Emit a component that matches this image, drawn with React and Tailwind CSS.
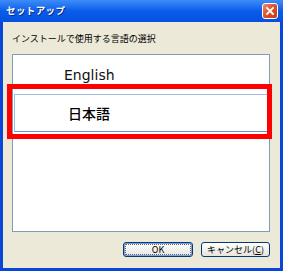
import React from "react";

export default function App() {
  const jp = { fontFamily: '"Noto Sans CJK JP", "Noto Sans", sans-serif' };
  return (
    <div className="relative w-[283px] h-[271px] flex flex-col bg-[#0A47D8] overflow-hidden" style={jp}>
      {/* Title bar */}
      <div className="h-[22px] flex items-center justify-between pl-[6px] pr-[5px] bg-gradient-to-b from-[#3C8CF8] via-[#0A5CE9] to-[#0550E0]">
        <span className="text-white text-[9.5px] font-bold leading-none tracking-[0.4px] [text-shadow:1px_1px_0_#0A2A8A]">セットアップ</span>
        <div className="w-[16px] h-[16px] rounded-[3px] border border-white bg-gradient-to-br from-[#E98A6C] via-[#DD4E26] to-[#C3401C] flex items-center justify-center">
          <svg width="10" height="10" viewBox="0 0 10 10">
            <path d="M2 2 L8 8 M8 2 L2 8" stroke="white" strokeWidth="1.8" strokeLinecap="square" />
          </svg>
        </div>
      </div>
      {/* Body */}
      <div className="flex-1 mx-[3px] mb-[3px] bg-[#ECE9D8] flex flex-col pl-[9px] pr-[10px]">
        <div className="h-[32px] flex items-center text-[9px] leading-none text-black pt-[1px]">
          インストールで使用する言語の選択
        </div>
        <div className="h-[178px] border border-[#7F9DB9] bg-white flex flex-col pt-[1px] px-[1px]">
          <div className="h-[38px] flex items-center pl-[50px] text-[14px] text-[#111]" style={{ fontFamily: '"DejaVu Sans", sans-serif' }}>
            English
          </div>
          <div className="h-[38px] flex items-center pl-[53px] border border-[#A3BAE6] border-b-[#6F8FD6] text-[14px] font-medium text-black">
            日本語
          </div>
        </div>
        <div className="flex-1 flex items-center justify-end gap-[8px] pb-[1px]">
          <button className="w-[70px] h-[15px] rounded-[3px] border border-[#003C74] bg-gradient-to-b from-[#FFFFFF] to-[#E6E4DC] flex items-center justify-center p-[1px] text-[9px] leading-none text-black shadow-[inset_0_0_0_1px_#7A9FE6]">
            <span className="w-full h-full border border-dotted border-[#666] rounded-[1px] flex items-center justify-center">OK</span>
          </button>
          <button className="w-[69px] h-[15px] rounded-[3px] border border-[#003C74] bg-gradient-to-b from-[#FFFFFF] to-[#E6E4DC] flex items-center justify-center text-[9px] leading-none text-black">
            キャンセル(<span className="underline">C</span>)
          </button>
        </div>
      </div>
      {/* Red annotation box */}
      <div className="absolute left-[7px] top-[84px] w-[265px] h-[55px] border-[5px] border-[#FF0000]" />
    </div>
  );
}
